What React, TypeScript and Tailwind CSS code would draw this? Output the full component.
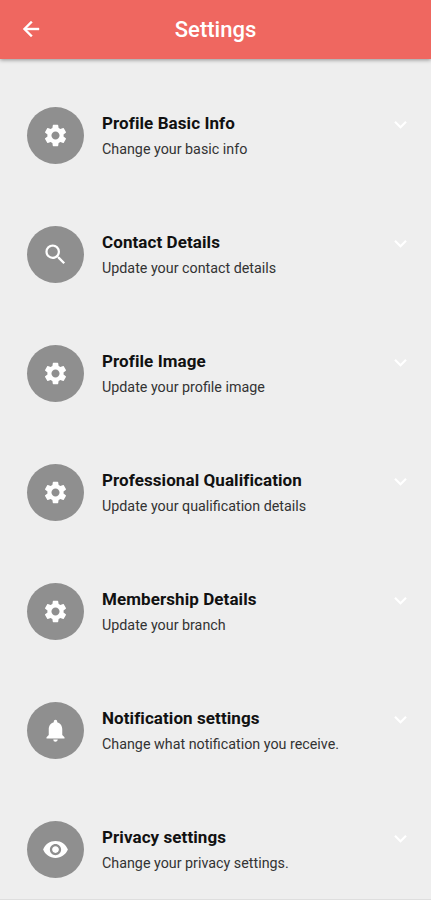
import { ReactNode } from "react";
import {
  MdExpandMore,
  MdNotifications,
  MdRemoveRedEye,
  MdSearch,
  MdSettings,
} from "react-icons/md";

interface SettingItem {
  id: number;
  title: string;
  description: string;
  icon: ReactNode;
}

const items: SettingItem[] = [
  {
    id: 1,
    title: "Profile Basic Info",
    description: "Change your basic info",
    icon: <MdSettings />,
  },
  {
    id: 2,
    title: "Contact Details",
    description: "Update your contact details",
    icon: <MdSearch />,
  },
  {
    id: 3,
    title: "Profile Image",
    description: "Update your profile image",
    icon: <MdSettings />,
  },
  {
    id: 4,
    title: "Professional Qualification",
    description: "Update your qualification details",
    icon: <MdSettings />,
  },
  {
    id: 5,
    title: "Membership Details",
    description: "Update your branch",
    icon: <MdSettings />,
  },
  {
    id: 6,
    title: "Notification settings",
    description: "Change what notification you receive.",
    icon: <MdNotifications />,
  },
  {
    id: 7,
    title: "Privacy settings",
    description: "Change your privacy settings.",
    icon: <MdRemoveRedEye />,
  },
];

export default function App() {
  return (
    <div className="h-[900px] overflow-hidden border-b border-[#dedede] bg-[#eeeeee] font-['Roboto',sans-serif]">
      <header className="grid h-[59px] grid-cols-[64px_1fr_64px] items-center bg-[#ef6760] text-white shadow-[0_1px_4px_rgba(0,0,0,0.4)]">
        <button className="-mt-0.5 pl-[19px]">
          <svg
            viewBox="0 0 24 24"
            className="size-6"
            fill="currentColor"
            stroke="currentColor"
            strokeWidth={0.4}
          >
            <path d="M20 11H7.83l5.59-5.59L12 4l-8 8 8 8 1.41-1.41L7.83 13H20v-2z" />
          </svg>
        </button>
        <h1 className="text-center text-[22px] font-medium">Settings</h1>
      </header>

      <ul className="pt-[17px]">
        {items.map(({ id, title, description, icon }) => (
          <li key={id} className="flex h-[119px] items-center pr-[18px] pl-[27px]">
            <div className="flex size-[57px] items-center justify-center rounded-full bg-[#8f8f8f] text-[27px] text-white">
              {icon}
            </div>
            <div className="ml-[18px] flex-1 pt-px">
              <h2 className="text-[17px] leading-[26px] font-bold tracking-[0.08px] text-[#111111]">
                {title}
              </h2>
              <p className="text-[14.3px] leading-[26px] text-[#333333]">
                {description}
              </p>
            </div>
            <MdExpandMore className="-mt-[22px] text-[25px] text-white" />
          </li>
        ))}
      </ul>
    </div>
  );
}
